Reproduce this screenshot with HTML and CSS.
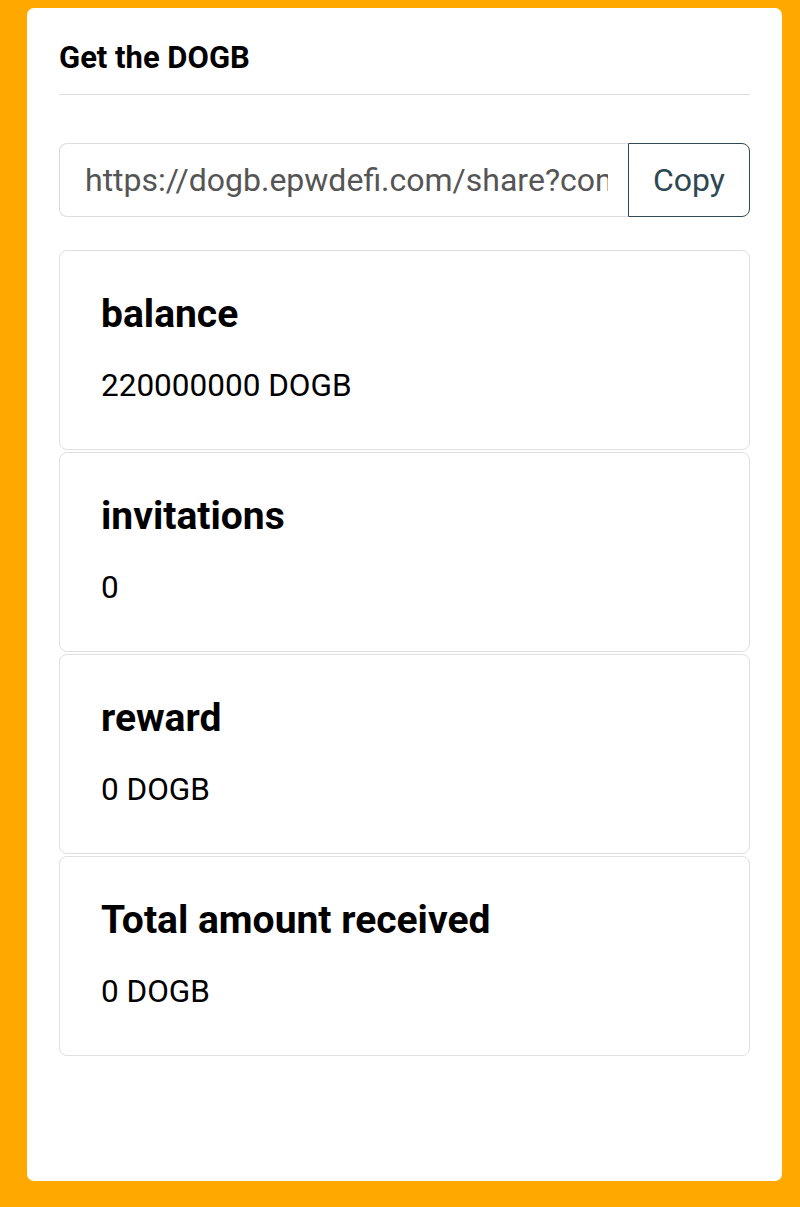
FILE: index.html
```html
<!DOCTYPE html>
<html>
<head>
    <title>Get the DOGB</title>
    <link rel="stylesheet" href="styles.css">
</head>
<body>
    <div class="panel">
        <h2 class="panel-title">Get the DOGB</h2>

        <div class="share">
            <input type="text" class="share-link" value="https://dogb.epwdefi.com/share?content=0x7a3f" readonly>
            <button class="share-copy">Copy</button>
        </div>

        <div class="stat">
            <h3>balance</h3>
            <p>220000000 DOGB</p>
        </div>
        <div class="stat">
            <h3>invitations</h3>
            <p>0</p>
        </div>
        <div class="stat">
            <h3>reward</h3>
            <p>0 DOGB</p>
        </div>
        <div class="stat">
            <h3>Total amount received</h3>
            <p>0 DOGB</p>
        </div>
    </div>
</body>
</html>
```

FILE: styles.css
```css
body {
    margin: 0;
    background-color: #ffa800;
    font-family: Roboto, "Liberation Sans", Arial, sans-serif;
    color: #000;
}

.panel {
    margin: 8px 18px 0 27px;
    height: 1173px;
    box-sizing: border-box;
    padding: 32px 32px 0 32px;
    background-color: #fff;
    border-radius: 7px;
}

.panel-title {
    margin: 0;
    font-size: 31px;
    line-height: 35px;
    font-weight: 700;
    padding-bottom: 19px;
    border-bottom: 1px solid #dedede;
}

.share {
    display: flex;
    height: 74px;
    margin-top: 48px;
    margin-bottom: 33px;
}

.share-link {
    flex: 1;
    min-width: 0;
    box-sizing: border-box;
    height: 100%;
    padding: 0 20px 0 25px;
    border: 1px solid #dcdcdc;
    border-right: none;
    border-radius: 8px 0 0 8px;
    font-family: inherit;
    font-size: 32px;
    color: #555;
    background: #fff;
    outline: none;
}

.share-copy {
    width: 122px;
    box-sizing: border-box;
    height: 100%;
    border: 1px solid #2f4a55;
    border-radius: 0 8px 8px 0;
    background: #fff;
    font-family: inherit;
    font-size: 32px;
    color: #2d4853;
    cursor: pointer;
}

.stat {
    height: 200px;
    box-sizing: border-box;
    margin-bottom: 2px;
    padding: 41px 41px 0 41px;
    border: 1px solid #e0e0e0;
    border-radius: 8px;
}

.stat h3 {
    margin: 0;
    font-size: 39px;
    line-height: 45px;
    font-weight: 700;
}

.stat p {
    margin: 30px 0 0 0;
    font-size: 31.5px;
    line-height: 37px;
}
```
